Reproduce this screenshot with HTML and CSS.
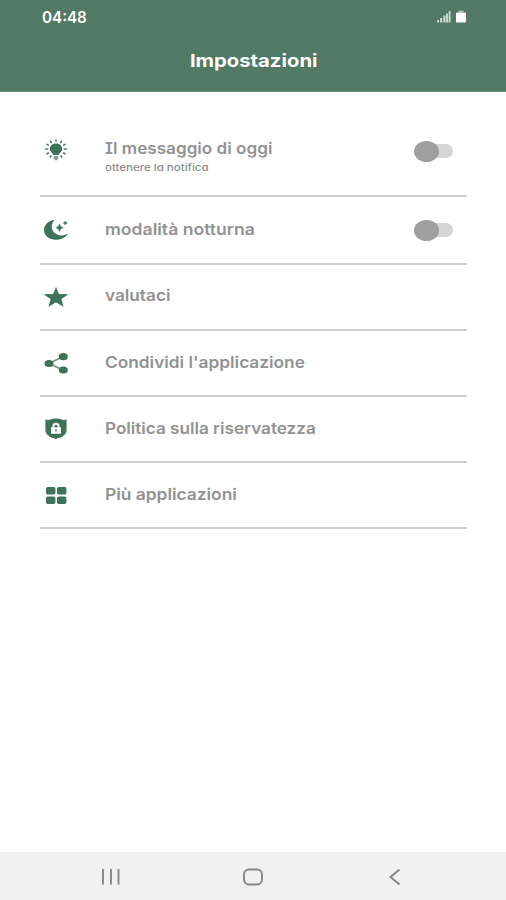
FILE: index.html
```html
<!DOCTYPE html>
<html lang="it">
<head>
<meta charset="utf-8">
<title>Impostazioni</title>
<link rel="stylesheet" href="styles.css">
</head>
<body>
<div class="screen">
  <header class="header">
    <div class="status">
      <span class="time">04:48</span>
      <svg class="status-icons" width="32" height="14" viewBox="0 0 32 14">
        <g fill="#c6d6cb"><rect x="1" y="10" width="2" height="2.5"/><rect x="4" y="8" width="2.2" height="4.5"/><rect x="7.3" y="5.500" width="2.200" height="7"/><rect x="10" y="3.500" width="2" height="9"/><rect x="12.600" y="1" width="2" height="11.500"/></g>
        <path d="M23 1h4v1.500h2q1 0 1 1v8q0 1-1 1h-8q-1 0-1-1v-8q0-1 1-1h2z" fill="#fff"/>
        <path d="M22.500 .5h5v2.300h-5z" fill="#a9c0b1"/>
      </svg>
    </div>
    <h1 class="title"><span>Impostazioni</span></h1>
  </header>
  <main class="list">
    <div class="row row-message">
      <svg class="icon" viewBox="0 0 28 28">
        <path d="M14 6.500c-3.600 0-6.100 2.200-6.100 5.300 0 3 2.600 3.800 3.500 6.300h5.200c.9-2.500 3.500-3.300 3.500-6.300 0-3.100-2.500-5.300-6.100-5.300z"/>
        <path d="M11.700 19h4.600v2.800l-1.300 1.500h-2l-1.300-1.500z" opacity=".65"/>
        <path class="ray" d="M14 3v1.200M8.500 4.200l.8 1.300M19.500 4.200l-.8 1.300M5 7.300l1.300.8M23 7.300l-1.300.8M3.800 12h1.500M24.200 12h-1.500M5 16.800l1.300-.8M23 16.800l-1.300-.8M8.200 20l.8-1M19.800 20l-.8-1"/>
      </svg>
      <div class="text"><span class="label serif-i l1">Il messaggio di oggi</span><span class="sub">ottenere la notifica</span></div>
      <span class="toggle"></span>
    </div>
    <div class="row row-night">
      <svg class="icon" viewBox="0 0 28 28">
        <path d="M12.500 4C6.500 4.500 2 8.800 2 14c0 5.600 5.300 9.800 12 9.800 5.500 0 10-2.400 11.700-6.300-2.200 1.600-4.700 2.200-7 1.900-8.700-.8-11.700-9.400-6.200-15.400z"/>
        <path d="M17.500 7.800q.6 3.300 3.700 3.900-3.100.6-3.700 3.800-.6-3.200-3.700-3.800 3.100-.6 3.700-3.900zM23.200 5q.3 1.700 2 2-1.700.3-2 2-.3-1.700-2-2 1.700-.3 2-2z" stroke="#4f795f" stroke-width=".6"/>
      </svg>
      <div class="text"><span class="label l2">modalità notturna</span></div>
      <span class="toggle"></span>
    </div>
    <div class="row row-rate">
      <svg class="icon" viewBox="0 0 28 28"><path d="M14 4l2.900 7.100 9.600.2-7.200 4.800 2.200 7.600L14 19.300l-7.500 4.400 2.200-7.600-7.200-4.800 9.600-.2z"/></svg>
      <div class="text"><span class="label l3">valutaci</span></div>
    </div>
    <div class="row">
      <svg class="icon" viewBox="0 0 28 28"><path d="M21 7.500L7 14.500l14 6.500" fill="none" stroke="#6d917b" stroke-width="1.500"/><ellipse cx="7" cy="14.500" rx="4.500" ry="3.600"/><ellipse cx="21.300" cy="7.700" rx="4.500" ry="3.600"/><ellipse cx="21.300" cy="21" rx="4.500" ry="3.600"/></svg>
      <div class="text"><span class="label l4">Condividi l'applicazione</span></div>
    </div>
    <div class="row">
      <svg class="icon" viewBox="0 0 28 28"><path d="M3.400 4.200q2 1 3.900.6Q10.500 3.600 14 3.600q3.500 0 6.700 1.200 1.900.4 3.900-.6V15c0 4.600-4.400 7.400-10.600 9C7.800 22.400 3.400 19.600 3.400 15z"/><path d="M9 12.300h1.500V10.800a3.500 3 0 0 1 7 0v1.500h1.500v6.500H9z" fill="#fff"/><path d="M12.300 12.300v-1a1.700 1.500 0 0 1 3.400 0v1zM13.400 14.300h1.200v2.200h-1.200z"/></svg>
      <div class="text"><span class="label l5">Politica sulla riservatezza</span></div>
    </div>
    <div class="row">
      <svg class="icon" viewBox="0 0 28 28"><rect x="4" y="6" width="9.400" height="7.600" rx="1.700"/><rect x="15" y="6" width="9.400" height="7.600" rx="1.700"/><rect x="4" y="15.400" width="9.400" height="7.600" rx="1.700"/><rect x="15" y="15.400" width="9.400" height="7.600" rx="1.700"/></svg>
      <div class="text"><span class="label l6">Più applicazioni</span></div>
    </div>
  </main>
  <nav class="nav">
    <svg width="20" height="18" viewBox="0 0 20 18"><path d="M2 1v15.500M10 1v15.500M17.500 1v15.500"/></svg>
    <svg width="20" height="18" viewBox="0 0 20 18"><rect x="1" y="1.500" width="18" height="15" rx="5"/></svg>
    <svg width="20" height="18" viewBox="0 0 20 18"><path d="M14.500 1.500L5.500 9l9 7.500"/></svg>
  </nav>
</div>
</body>
</html>
```
FILE: styles.css
```css
* { box-sizing: border-box; }
body { margin: 0; background: #fff; font-family: Inter, "Liberation Sans", sans-serif; }
.screen { height: 900px; display: flex; flex-direction: column; }
.header { height: 92px; background: #517963; color: #fff; border-bottom: 1px solid #6c8f7a; }
.status { height: 34px; padding: 0 38px 0 42px; display: flex; align-items: center; justify-content: space-between; }
.time { font-size: 15.500px; font-weight: 600; transform: scaleX(.98); transform-origin: left; }
.title { margin: 0; height: 54px; line-height: 54px; padding-left: 1px; text-align: center; font-size: 18px; font-weight: 700; }
.title span { display: inline-block; transform: scaleX(1.125); }
.list { flex: 1; padding: 13px 39px 0 40px; }
.row { height: 66.200px; display: flex; align-items: center; border-bottom: 2px solid #cfcfcf; }
.row-message { height: 92px; }
.row-message .icon, .row-message .toggle { margin-top: 2px; }
.row-night { height: 67.500px; }
.row-night .toggle { margin-top: 1px; }
.icon { width: 28px; height: 28px; margin-left: 2px; flex: none; fill: #3d7356; }
.ray { fill: none; stroke: #3d7356; stroke-width: 1.500; stroke-linecap: round; }
.text { flex: 1; margin-left: 35px; padding-bottom: 2px; display: flex; flex-direction: column; align-items: flex-start; }
.row-message .text { padding: 13px 0 0; }
.row-rate .text { padding-bottom: 4px; }
.label { font-size: 16px; line-height: 20px; font-weight: 600; color: #929292; white-space: nowrap; transform: scaleX(1.1); transform-origin: left; }
.serif-i { font-feature-settings: "cv08"; }
.l1 { transform: scaleX(1.070); }
.l3 { transform: scaleX(1.075); }
.l4 { transform: scaleX(1.080); }
.l5 { transform: scaleX(1.070); }
.l6 { transform: scaleX(1.085); }
.sub { font-size: 9.500px; line-height: 14px; font-weight: 500; color: #8c8c8c; white-space: nowrap; transform: scaleX(1.210); transform-origin: left; margin-top: 3px; font-feature-settings: "cv11"; }
.toggle { width: 39px; height: 22px; margin-right: 14px; flex: none; position: relative; }
.toggle::before { content: ""; position: absolute; left: 12px; right: 0; top: 4px; height: 14px; border-radius: 7px; background: #d5d5d5; }
.toggle::after { content: ""; position: absolute; left: 0; top: .5px; width: 25px; height: 21px; border-radius: 50%; background: #9f9f9f; }
.nav { height: 48px; background: #f1f1f1; display: flex; align-items: center; justify-content: space-between; padding: 1px 101px 0; }
.nav svg { fill: none; stroke: #858585; stroke-width: 1.900; }
```
